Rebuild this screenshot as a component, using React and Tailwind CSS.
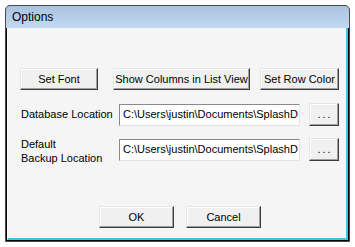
import React from "react";

const btn =
  "flex items-center justify-center bg-[#f0f0f0] border border-t-[#e6e6e6] border-l-[#e6e6e6] border-b-[#3c3c3c] border-r-[#3c3c3c] shadow-[inset_-1px_-1px_0_#a0a0a0,inset_1px_1px_0_#ffffff] text-[11px] text-black leading-none";

const field =
  "flex items-center w-[181px] h-[22px] bg-white border border-t-[#8a8a8a] border-l-[#8a8a8a] border-b-[#e3e3e3] border-r-[#e3e3e3] pl-[3px] overflow-hidden whitespace-nowrap text-[11px] text-black";

export default function App() {
  return (
    <div
      className="w-[355px] h-[247px] bg-white pt-[5px] pl-[5px] pr-[5px] pb-[5px]"
      style={{ fontFamily: '"Liberation Sans", Arial, sans-serif' }}
    >
      <div className="flex flex-col h-full border border-[#4a4a4a] rounded-t-[5px] overflow-hidden bg-black">
        <div className="h-[22px] flex items-center pl-[6px] bg-gradient-to-b from-[#a9c3e0] to-[#c3d9f1] text-[12px] text-black">
          Options
        </div>
        <div className="flex-1 flex flex-col ml-[1px] bg-[#f5f5f5] border-l border-white border-r-[2px] border-r-[#3fc3e8] border-b-[2px] border-b-[#3fc3e8] mb-[1px] mr-[1px]">
          <div className="flex flex-col pl-[12px] pt-[40px]">
            <div className="flex h-[22px]">
              <div className={btn + " w-[78px]"}>Set Font</div>
              <div className={btn + " w-[137px] ml-[15px]"}>Show Columns in List View</div>
              <div className={btn + " w-[79px] ml-[10px]"}>Set Row Color</div>
            </div>

            <div className="flex items-center mt-[13px] h-[23px]">
              <div className="w-[99px] text-[11px] text-black pl-[1px]">Database Location</div>
              <div className={field}>C:\Users\justin\Documents\SplashD</div>
              <div className={btn + " w-[30px] h-[23px] ml-[9px] tracking-[2px] pl-[2px]"}>...</div>
            </div>

            <div className="flex items-center mt-[12px] h-[23px]">
              <div className="w-[99px] text-[11px] leading-[14px] text-black pl-[1px] pt-[2px]">
                Default
                <br />
                Backup Location
              </div>
              <div className={field}>C:\Users\justin\Documents\SplashD</div>
              <div className={btn + " w-[30px] h-[23px] ml-[9px] tracking-[2px] pl-[2px]"}>...</div>
            </div>

            <div className="flex h-[22px] mt-[45px] pl-[79px]">
              <div className={btn + " w-[75px]"}>OK</div>
              <div className={btn + " w-[75px] ml-[12px]"}>Cancel</div>
            </div>
          </div>
        </div>
      </div>
    </div>
  );
}
